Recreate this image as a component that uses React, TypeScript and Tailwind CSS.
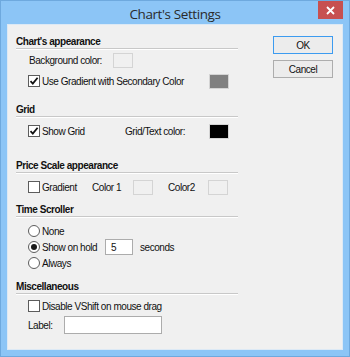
import React from "react";

const Check = ({ checked }: { checked?: boolean }) => (
  <span className="w-[12px] h-[12px] bg-white border border-[#5c5c5c] flex items-center justify-center shrink-0">
    {checked && (
      <svg width="10" height="10" viewBox="0 0 10 10">
        <path d="M1.5 5.2 L3.8 7.6 L8.6 1.8" fill="none" stroke="#111" strokeWidth="1.8" />
      </svg>
    )}
  </span>
);

const Radio = ({ checked }: { checked?: boolean }) => (
  <span className="w-[12px] h-[12px] rounded-full bg-white border border-[#5c5c5c] flex items-center justify-center shrink-0">
    {checked && <span className="w-[6px] h-[6px] rounded-full bg-[#1a1a1a]" />}
  </span>
);

const ColorBox = ({ color }: { color: string }) => (
  <span className="w-[20px] h-[15px] border border-[#d4d4d4] shrink-0" style={{ backgroundColor: color }} />
);

const Sep = () => (
  <div className="w-[222px] h-[2px] border-t border-[#c8c8c8] border-b border-b-white" />
);

const Heading = ({ children }: { children: React.ReactNode }) => (
  <div className="h-[14px] flex items-center font-bold text-[#111]">{children}</div>
);

export default function App() {
  return (
    <div className="w-[350px] h-[357px] bg-[#8cc5f6] border border-[#6ea9de] flex flex-col" style={{ fontFamily: '"Liberation Sans", Arial, sans-serif' }}>
      <div className="h-[23px] flex items-start shrink-0">
        <div className="w-[31px]" />
        <div className="flex-1 text-center pt-[3px] text-[13.5px] text-[#2a2a2a] tracking-[-0.4px]" style={{ fontFamily: '"Open Sans", "Noto Sans", sans-serif' }}>
          Chart's Settings
        </div>
        <div className="w-[25px] h-[18px] mr-[6px] bg-[#c75050] flex items-center justify-center">
          <svg width="9" height="9" viewBox="0 0 9 9">
            <path d="M1 1 L8 8 M8 1 L1 8" stroke="#fff" strokeWidth="1.8" />
          </svg>
        </div>
      </div>
      <div className="flex-1 mx-[6px] mb-[6px] bg-[#f0f0f0] border border-[#dce9f5] flex text-[10px] tracking-[-0.45px] text-[#111]">
        <div className="flex flex-col pl-[8px] pt-[9px] w-[230px]">
          <Heading>Chart's appearance</Heading>
          <Sep />
          <div className="mt-[2px] h-[16px] flex items-center pl-[13px]">
            <span className="w-[84px]">Background color:</span>
            <ColorBox color="#f0f0f0" />
          </div>
          <div className="mt-[5px] h-[16px] flex items-center pl-[12px]">
            <Check checked />
            <span className="ml-[2px]">Use Gradient with Secondary Color</span>
            <span className="ml-auto mr-[9px] flex"><ColorBox color="#808080" /></span>
          </div>
          <div className="mt-[13px]"><Heading>Grid</Heading></div>
          <Sep />
          <div className="mt-[5px] h-[16px] flex items-center pl-[12px]">
            <span className="w-[97px] flex items-center">
              <Check checked />
              <span className="ml-[2px]">Show Grid</span>
            </span>
            <span>Grid/Text color:</span>
            <span className="ml-auto mr-[9px] flex"><ColorBox color="#000000" /></span>
          </div>
          <div className="mt-[19px]"><Heading>Price Scale appearance</Heading></div>
          <Sep />
          <div className="mt-[5px] h-[16px] flex items-center pl-[12px]">
            <span className="w-[64px] flex items-center">
              <Check />
              <span className="ml-[2px]">Gradient</span>
            </span>
            <span className="w-[41px]">Color 1</span>
            <ColorBox color="#f0f0f0" />
            <span className="w-[15px]" />
            <span className="w-[40px]">Color2</span>
            <ColorBox color="#f0f0f0" />
          </div>
          <div className="mt-[7px]"><Heading>Time Scroller</Heading></div>
          <Sep />
          <div className="mt-[6px] h-[14px] flex items-center pl-[12px]">
            <Radio />
            <span className="ml-[2px]">None</span>
          </div>
          <div className="mt-[1px] h-[16px] flex items-center pl-[12px]">
            <span className="w-[77px] flex items-center">
              <Radio checked />
              <span className="ml-[2px]">Show on hold</span>
            </span>
            <span className="w-[28px] h-[16px] bg-white border border-[#acacac] pl-[5px] flex items-center">5</span>
            <span className="ml-[7px]">seconds</span>
          </div>
          <div className="mt-[1px] h-[14px] flex items-center pl-[12px]">
            <Radio />
            <span className="ml-[2px]">Always</span>
          </div>
          <div className="mt-[9px]"><Heading>Miscellaneous</Heading></div>
          <Sep />
          <div className="mt-[4px] h-[14px] flex items-center pl-[12px]">
            <Check />
            <span className="ml-[2px]">Disable VShift on mouse drag</span>
          </div>
          <div className="mt-[3px] h-[18px] flex items-center pl-[12px]">
            <span className="w-[36px]">Label:</span>
            <span className="w-[98px] h-[18px] bg-white border border-[#acacac]" />
          </div>
        </div>
        <div className="flex flex-col pl-[35px] pt-[11px] gap-[6px]">
          <div className="w-[60px] h-[18px] bg-[#ececec] border border-[#3c9bf0] flex items-center justify-center">OK</div>
          <div className="w-[60px] h-[18px] bg-[#ececec] border border-[#adadad] flex items-center justify-center">Cancel</div>
        </div>
      </div>
    </div>
  );
}
